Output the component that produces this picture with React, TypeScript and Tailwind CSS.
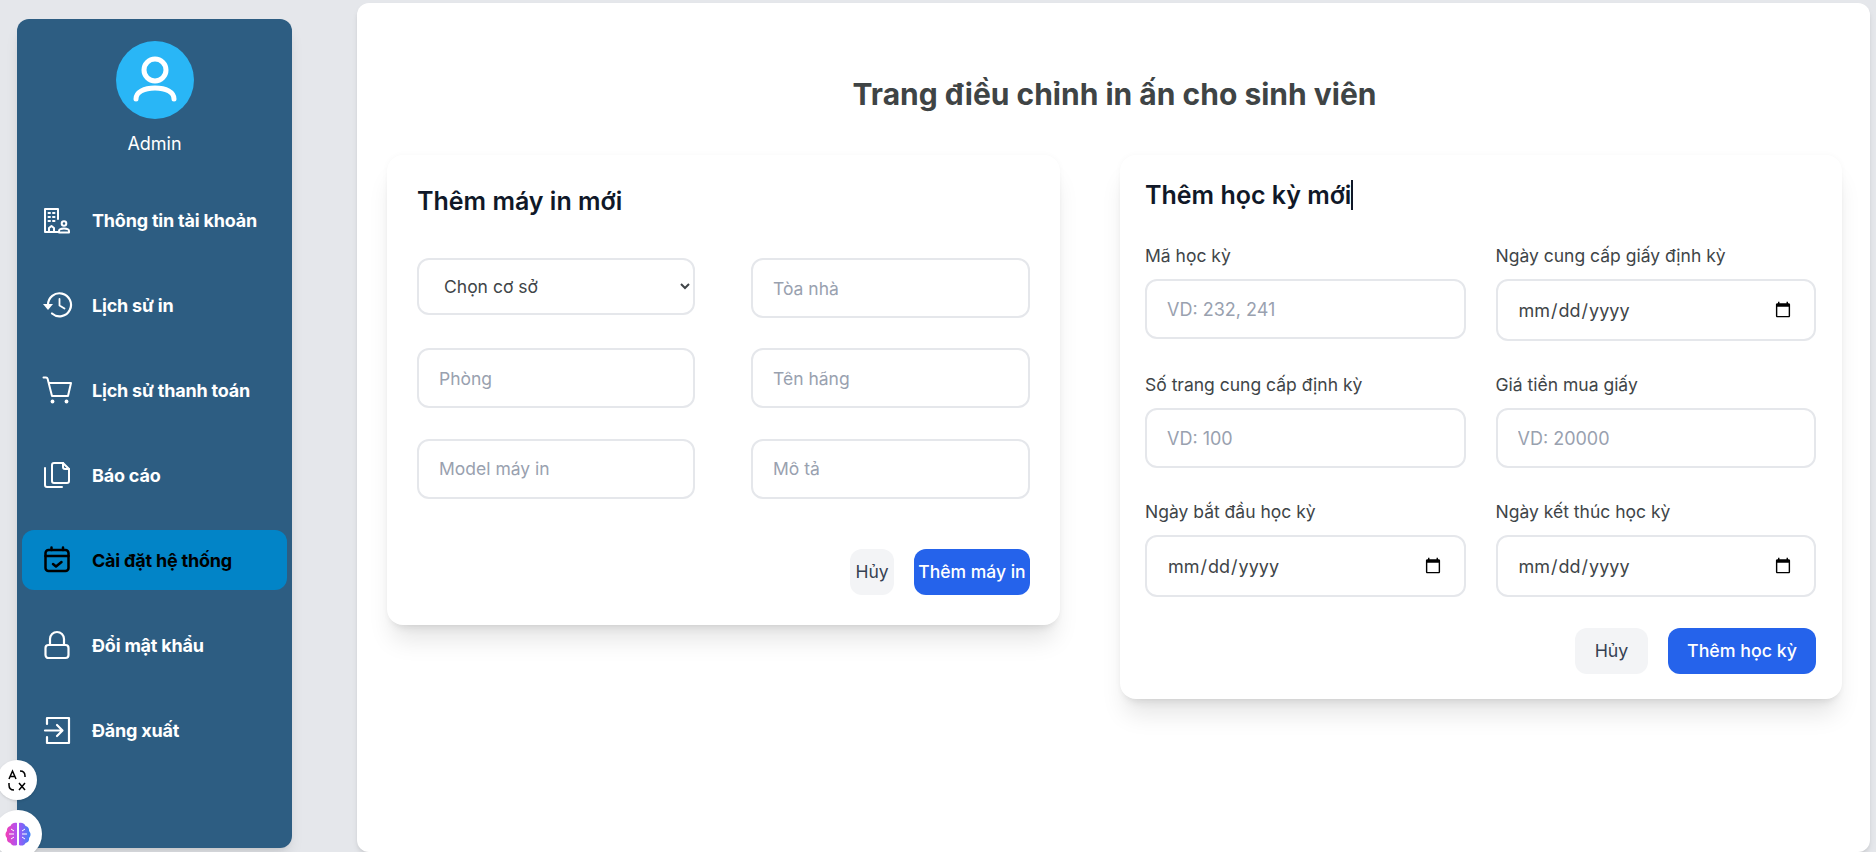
import React from "react";

const svgProps = {
  width: 32,
  height: 32,
  viewBox: "0 0 32 32",
  fill: "none",
  stroke: "currentColor",
  strokeLinecap: "round" as const,
  strokeLinejoin: "round" as const,
};

const BuildingIcon = () => (
  <svg {...svgProps} strokeWidth="2">
    <path d="M16 15V5H3v23h13" />
    <path d="M6.500 9h1.500M11 9h1.500M6.500 13h1.500M11 13h1.500M6.500 17h1.500M11 17h1.500" strokeWidth="2" />
    <path d="M7 28v-4l2.500-2 2.500 2v4" />
    <circle cx="22" cy="19.500" r="2.300" />
    <path d="M17 28.500V27c0-1.500 2-2.500 5-2.500s5 1 5 2.500v1.500z" />
  </svg>
);
const HistoryIcon = () => (
  <svg {...svgProps} strokeWidth="2.200">
    <path d="M6 16a11.500 11.500 0 1 1 4 8.500" />
    <path d="M1 15h10l-5 6z" fill="currentColor" stroke="none" />
    <path d="M17.500 10v6.500l5 3" strokeWidth="1.800" />
  </svg>
);
const CartIcon = () => (
  <svg {...svgProps} strokeWidth="2">
    <path d="M1.500 3.500H4c.8 0 1.400.5 1.600 1.300L10 22h16l3-13H7" />
    <circle cx="10.500" cy="27.500" r="1.900" fill="currentColor" stroke="none" />
    <circle cx="24.500" cy="27.500" r="1.900" fill="currentColor" stroke="none" />
  </svg>
);
const DocsIcon = () => (
  <svg {...svgProps} strokeWidth="2">
    <path d="M3 9v17a2 2 0 0 0 2 2h15" />
    <path d="M12 4h9l6 6v12a2 2 0 0 1-2 2H12a2 2 0 0 1-2-2V6a2 2 0 0 1 2-2z" />
    <path d="M21 4v4a2 2 0 0 0 2 2h4" />
  </svg>
);
const CalendarCheckIcon = () => (
  <svg {...svgProps} strokeWidth="2.500">
    <rect x="3.500" y="6" width="23" height="21" rx="3" />
    <path d="M3.500 12h23M9.500 3.500V6M21 3.500V6" />
    <path d="m11 20 3 2.500 5.500-4.500" />
  </svg>
);
const LockIcon = () => (
  <svg {...svgProps} strokeWidth="2.200">
    <rect x="3.500" y="16" width="23" height="13" rx="3" />
    <path d="M8 16v-6a7 7 0 0 1 14 0v6" />
  </svg>
);
const LogoutIcon = () => (
  <svg {...svgProps} strokeWidth="2.200">
    <path d="M5 10V4h22v25H5v-6" />
    <path d="M3 16.500h17M15 11l5.500 5.500L15 22" />
  </svg>
);

const items = [
  { label: "Thông tin tài khoản", icon: <BuildingIcon /> },
  { label: "Lịch sử in", icon: <HistoryIcon /> },
  { label: "Lịch sử thanh toán", icon: <CartIcon /> },
  { label: "Báo cáo", icon: <DocsIcon /> },
  { label: "Cài đặt hệ thống", icon: <CalendarCheckIcon />, active: true },
  { label: "Đổi mật khẩu", icon: <LockIcon /> },
  { label: "Đăng xuất", icon: <LogoutIcon /> },
];

const inputCls = "w-full h-[60px] border-2 border-gray-200 rounded-xl bg-white px-[20px] text-[17.5px] text-gray-700 placeholder:text-gray-400 outline-none";
const rightInputCls = "w-full h-[60px] border-2 border-gray-200 rounded-xl bg-white px-[20px] text-[18px] text-gray-700 placeholder:text-gray-400 outline-none";

function Field({ label, placeholder, date }: { label: string; placeholder?: string; date?: boolean }) {
  return (
    <div className="flex flex-col">
      <label className="h-[24px] text-[17.5px] leading-[24px] text-[#404548] mb-[11px]">{label}</label>
      {date ? (
        <input type="date" className="w-full h-[62px] border-2 border-gray-200 rounded-xl bg-white px-[20px] text-[18px] text-[#404548] outline-none" />
      ) : (
        <input placeholder={placeholder} className={rightInputCls} />
      )}
    </div>
  );
}

const cardShadow = "shadow-[0_20px_25px_-5px_rgba(0,0,0,0.1),0_8px_10px_-6px_rgba(0,0,0,0.1),0_0_6px_rgba(0,0,0,0.03)]";

export default function App() {
  return (
    <div className="h-[852px] w-[1876px] overflow-hidden bg-gray-200 flex font-['Inter',sans-serif] relative">
      <aside className="w-[275px] h-[829px] mt-[19px] ml-[17px] bg-[#2d5d82] rounded-xl shadow-lg flex flex-col items-stretch px-[5px] shrink-0">
        <div className="flex flex-col items-center pt-[22px]">
          <div className="w-[78px] h-[78px] rounded-full bg-[#29b6f6] flex items-center justify-center text-white">
            <svg width="56" height="56" viewBox="0 0 56 56" fill="none" stroke="currentColor" strokeWidth="5" strokeLinecap="round">
              <circle cx="28" cy="18" r="11" />
              <path d="M9 47c0-7 8-11 19-11s19 4 19 11" />
            </svg>
          </div>
          <div className="text-white text-[18px] leading-[24px] mt-[13px]">Admin</div>
        </div>
        <nav className="flex flex-col gap-[25px] mt-[34px]">
          {items.map((it) => (
            <div key={it.label} className={`h-[60px] rounded-xl flex items-center ${it.active ? "bg-[#0284c7] text-black" : "text-white"}`}>
              <div className="w-[70px] pl-[20px] flex items-center shrink-0 h-full">{it.icon}</div>
              <span className="text-[18px] font-bold tracking-[-0.2px]">{it.label}</span>
            </div>
          ))}
        </nav>
      </aside>

      <main className="ml-[65px] mt-[3px] w-[1513px] h-[849px] bg-white rounded-xl shadow-md pl-[30px] pr-[28px] shrink-0">
        <h1 className="text-center text-[30px] font-bold text-[#3f4445] leading-[36px] pt-[73px] h-[110px] box-content">Trang điều chỉnh in ấn cho sinh viên</h1>
        <div className="flex gap-[60px] items-start mt-[-31px]">
          <section className={`w-[673px] h-[470px] shrink-0 rounded-2xl bg-white ${cardShadow} px-[30px] pt-[31px]`}>
            <h2 className="text-[25px] leading-[30px] font-semibold text-gray-900">Thêm máy in mới</h2>
            <div className="grid grid-cols-[278px_279px] gap-x-[56px] gap-y-[30.4px] mt-[42px] items-start">
              <select className="h-[57px] w-full border-2 border-gray-200 rounded-xl bg-white pl-[21px] pr-[22px] text-[17.5px] text-[#404548] outline-none">
                <option>Chọn cơ sở</option>
              </select>
              <input placeholder="Tòa nhà" className={inputCls} />
              <input placeholder="Phòng" className={inputCls} />
              <input placeholder="Tên hãng" className={inputCls} />
              <input placeholder="Model máy in" className={inputCls} />
              <input placeholder="Mô tả" className={inputCls} />
            </div>
            <div className="flex justify-end gap-[20px] mt-[50px]">
              <button className="h-[46px] w-[44px] rounded-xl bg-gray-100 text-gray-700 text-[17.5px]">Hủy</button>
              <button className="h-[46px] w-[116px] rounded-xl bg-[#2563eb] text-white text-[17.5px] font-medium">Thêm máy in</button>
            </div>
          </section>

          <section className={`w-[722px] h-[544px] shrink-0 rounded-2xl bg-white ${cardShadow} pl-[25px] pr-[26px] pt-[25px]`}>
            <h2 className="text-[25px] leading-[30px] font-semibold text-gray-900 flex items-center">
              Thêm học kỳ mới<span className="inline-block w-[2px] h-[30px] bg-gray-900" />
            </h2>
            <div className="grid grid-cols-2 gap-x-[30px] gap-y-[32px] mt-[34px]">
              <Field label="Mã học kỳ" placeholder="VD: 232, 241" />
              <Field label="Ngày cung cấp giấy định kỳ" date />
              <Field label="Số trang cung cấp định kỳ" placeholder="VD: 100" />
              <Field label="Giá tiền mua giấy" placeholder="VD: 20000" />
              <Field label="Ngày bắt đầu học kỳ" date />
              <Field label="Ngày kết thúc học kỳ" date />
            </div>
            <div className="flex justify-end gap-[20px] mt-[31px]">
              <button className="h-[46px] w-[73px] rounded-xl bg-gray-100 text-gray-700 text-[17.8px]">Hủy</button>
              <button className="h-[46px] w-[148px] rounded-xl bg-[#2563eb] text-white text-[17.8px] font-medium">Thêm học kỳ</button>
            </div>
          </section>
        </div>
      </main>

      <div className="absolute left-[-3px] top-[760px] w-[40px] h-[40px] rounded-full bg-white shadow flex items-center justify-center text-black">
        <svg width="22" height="22" viewBox="0 0 22 22" fill="none" stroke="currentColor" strokeWidth="1.500">
          <path d="M3 10 6.500 2 10 10M4.300 7.500h4.500M14 2c3 0 5 2 5 5v1M8 21c-3 0-5-2-5-5v-2M13 14l6 7M19 14l-6 7" />
        </svg>
      </div>
      <div className="absolute left-[-6px] top-[810px] w-[48px] h-[48px] rounded-full bg-white shadow flex items-center justify-center">
        <svg width="26" height="24" viewBox="0 0 26 24">
          <defs>
            <linearGradient id="brain" x1="0" y1="0" x2="1" y2="0">
              <stop offset="0" stopColor="#f43fb5" />
              <stop offset="0.5" stopColor="#a855f7" />
              <stop offset="1" stopColor="#3b82f6" />
            </linearGradient>
          </defs>
          <path fill="url(#brain)" d="M12 1C9 0 6 2 5.500 4 3 4.500 1.500 7 2 9c-2 2-2 5 0 7-.5 2.500 1 4.500 3.500 5 .5 2 3.500 3.500 6.500 2zM14 1c3-1 6 1 6.500 3 2.500.5 4 3 3.500 5 2 2 2 5 0 7 .5 2.500-1 4.500-3.500 5-.5 2-3.500 3.500-6.500 2z" />
          <path d="M4 12h5M17 12h5M6 7l3 2M20 7l-3 2M6 17l3-2M20 17l-3-2" stroke="#fff" strokeWidth="1" fill="none" />
        </svg>
      </div>
    </div>
  );
}
